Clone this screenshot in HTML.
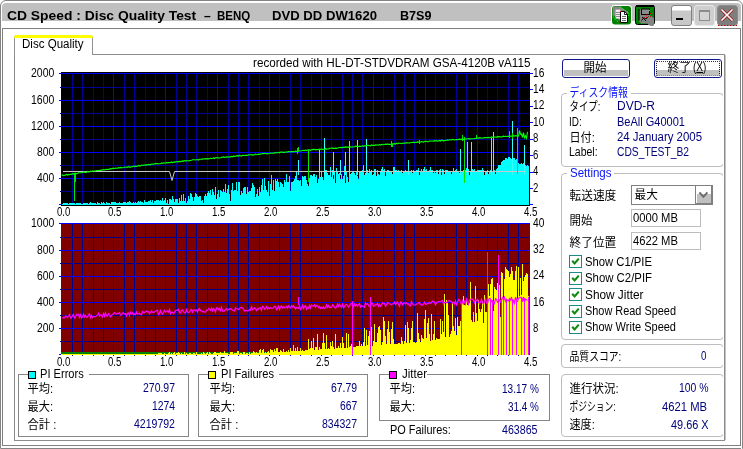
<!DOCTYPE html>
<html lang="ja"><head><meta charset="utf-8"><title>CD Speed : Disc Quality Test</title><style>
html,body{margin:0;padding:0;background:#fff}
body{width:743px;height:449px;overflow:hidden;position:relative;font-family:"Liberation Sans",sans-serif}
#win{will-change:transform;position:absolute;left:0;top:0;width:743px;height:449px;overflow:hidden;background:#fff}
#win div{box-sizing:content-box}
.t{position:absolute;overflow:visible;display:block}
.t text{font-family:"Liberation Sans",sans-serif;font-size:12.5px;white-space:pre}
.j{position:absolute;overflow:visible}
.j text{font-family:"Liberation Sans","Noto Sans CJK JP",sans-serif;font-size:12px;white-space:pre}
u{text-decoration:underline}
</style></head>
<body>
<div id="win">
<div style="position:absolute;left:0px;top:0px;width:741px;height:448px;border:1px solid #848484;border-bottom:1px solid #848484;border-radius:6px 6px 0 0;background:#fff;box-sizing:content-box;width:741px;height:447px"></div>
<div style="position:absolute;left:2px;top:3px;width:739px;height:18px;background:#c0c0c0;border-radius:4px 4px 0 0"></div>
<div style="position:absolute;left:2px;top:28px;width:737px;height:416px;border:1px solid #808080;background:#fff"></div>
<div style="position:absolute;left:741px;top:6px;width:1px;height:443px;background:#fff"></div>
<svg class="t" style="left:6.80px;top:7.60px" width="190.20" height="16"><text x="0" y="12" textLength="189.20" lengthAdjust="spacingAndGlyphs" fill="#000" font-weight="bold">CD Speed : Disc Quality Test</text></svg>
<svg class="t" style="left:203.50px;top:7.60px" width="7.70" height="16"><text x="0" y="12" textLength="6.70" lengthAdjust="spacingAndGlyphs" fill="#000" font-weight="bold">–</text></svg>
<svg class="t" style="left:217.40px;top:7.60px" width="34.20" height="16"><text x="0" y="12" textLength="33.20" lengthAdjust="spacingAndGlyphs" fill="#000" font-weight="bold">BENQ</text></svg>
<svg class="t" style="left:272.30px;top:7.60px" width="106.00" height="16"><text x="0" y="12" textLength="105.00" lengthAdjust="spacingAndGlyphs" fill="#000" font-weight="bold">DVD DD DW1620</text></svg>
<svg class="t" style="left:399.50px;top:7.60px" width="32.50" height="16"><text x="0" y="12" textLength="31.50" lengthAdjust="spacingAndGlyphs" fill="#000" font-weight="bold">B7S9</text></svg>
<svg style="position:absolute;left:611px;top:5px" width="21" height="21" viewBox="0 0 21 21">
<rect x="0" y="0" width="21" height="20.5" rx="4" fill="#fff"/>
<rect x="1" y="1" width="19" height="18.5" rx="3" fill="#008000"/>
<path d="M1.6 3Q1.6 1.6 3 1.6H9L17 7V16H9L1.6 9.5Z" fill="#858585"/>
<path d="M9 1.8L17.5 7.5V12M1.8 9.5L2.5 13L8 17.5" stroke="#1dff1d" stroke-width="1" stroke-dasharray="1 1.1" fill="none"/>
<rect x="4.6" y="4.6" width="4.8" height="9" fill="#ededed"/>
<path d="M5 7.5h4M5 9.5h4M5 11.5h4" stroke="#8a8a8a" stroke-width="1" shape-rendering="crispEdges"/>
<path d="M9.5 6.5h4.2l2.8 2.8v8.2h-7z" fill="#fff" stroke="#000" stroke-width="1"/>
<path d="M13.5 6.5v3h3" fill="none" stroke="#000" stroke-width=".9"/>
<path d="M11 11.5h4M11 13.5h4M11 15.5h4" stroke="#6e6e6e" stroke-width="1" shape-rendering="crispEdges"/>
<rect x="9" y="6" width="1" height="1" fill="#d00"/><rect x="8.5" y="17" width="1" height="1" fill="#d00"/>
</svg>
<svg style="position:absolute;left:635px;top:5px" width="21" height="21" viewBox="0 0 21 21">
<rect x=".5" y=".5" width="19" height="19" rx="2" fill="#008000" stroke="#000" stroke-width="1"/>
<rect x="1" y="0" width="18" height="2" fill="#000"/>
<path d="M4 4.5V16L6 18.5H12.5L13.5 20L17.5 21.5L19 20V13L15 10.5V4.5" fill="#858585"/>
<rect x="6.5" y="4" width="8" height="5.5" fill="#8c8c8c" stroke="#000" stroke-width="1"/>
<path d="M4 4V15.5" stroke="#000" stroke-width="1.2"/>
<path d="M6.5 15.5L9 12.5L11 14L13.5 11.5M7 12l4 4" stroke="#000" stroke-width=".9" fill="none"/>
<g fill="#e00000"><rect x="4" y="7" width="1" height="1"/><rect x="15" y="8" width="1" height="1"/><rect x="15" y="11" width="1" height="1"/><rect x="6" y="15.5" width="1" height="1"/><rect x="11" y="12" width="1" height="1"/><rect x="8.5" y="12" width="1" height="1"/><rect x="11" y="9.5" width="1" height="1"/></g>
<rect x="14" y="5" width="1" height="1" fill="#2f2"/>
</svg>
<div style="position:absolute;left:671px;top:5px;width:19px;height:19px;border:1px solid #808080;border-radius:3px;background:linear-gradient(#fff 0,#fff 4px,#c8c8c8 5px,#c8c8c8 100%)"></div>
<div style="position:absolute;left:676px;top:18px;width:7px;height:2px;background:#000"></div>
<div style="position:absolute;left:694px;top:5px;width:19px;height:19px;border:1px solid #e8e8e8;border-radius:3px;background:#cfcfcf"></div>
<div style="position:absolute;left:699px;top:10px;width:9px;height:9px;border:1px solid #8c8c8c;border-top:2px solid #8c8c8c;background:#d4d4d4;box-sizing:content-box;width:9px;height:8px"></div>
<svg style="position:absolute;left:717px;top:5px" width="21" height="21" viewBox="0 0 21 21">
<rect x=".5" y=".5" width="20" height="20" rx="3" fill="#7e7e7e" stroke="#8c8c8c"/>
<path d="M4.5 4.5L15.5 15.5M15.5 4.5L4.5 15.5" stroke="#9b0000" stroke-width="3"/>
<path d="M4.5 4.5L15.5 15.5M15.5 4.5L4.5 15.5" stroke="#fff" stroke-width="1.7"/>
<path d="M1 20.5H20" stroke="#c00000" stroke-width="1" stroke-dasharray="1.4 1.6"/>
</svg>
<div style="position:absolute;left:14px;top:54px;width:709px;height:385px;border:1px solid #8c8c8c;background:#fff"></div>
<div style="position:absolute;left:725px;top:55px;width:1px;height:385px;background:#c4c4c4"></div>
<div style="position:absolute;left:14px;top:35px;width:77px;height:20px;border:1px solid #919191;border-bottom:0;border-top:0;background:#fff;border-radius:3px 3px 0 0"></div>
<div style="position:absolute;left:14px;top:35px;width:79px;height:3px;background:#ffff00;border-radius:3px 3px 0 0"></div>
<svg class="t" style="left:21.90px;top:36.40px" width="62.60" height="16"><text x="0" y="12" textLength="61.60" lengthAdjust="spacingAndGlyphs" fill="#000">Disc Quality</text></svg>
<svg id="charts" style="position:absolute;left:0;top:0" width="743" height="449" viewBox="0 0 743 449" shape-rendering="crispEdges"><rect x="61" y="72" width="469" height="134" fill="#000"/><rect x="72" y="73" width="1" height="132" fill="#000096"/><rect x="82" y="73" width="1" height="132" fill="#000096"/><rect x="93" y="73" width="1" height="132" fill="#000096"/><rect x="103" y="73" width="1" height="132" fill="#000096"/><rect x="113" y="73" width="1" height="132" fill="#0000ff"/><rect x="124" y="73" width="1" height="132" fill="#000096"/><rect x="134" y="73" width="1" height="132" fill="#000096"/><rect x="145" y="73" width="1" height="132" fill="#000096"/><rect x="155" y="73" width="1" height="132" fill="#000096"/><rect x="165" y="73" width="1" height="132" fill="#0000ff"/><rect x="176" y="73" width="1" height="132" fill="#000096"/><rect x="186" y="73" width="1" height="132" fill="#000096"/><rect x="196" y="73" width="1" height="132" fill="#000096"/><rect x="207" y="73" width="1" height="132" fill="#000096"/><rect x="217" y="73" width="1" height="132" fill="#0000ff"/><rect x="228" y="73" width="1" height="132" fill="#000096"/><rect x="238" y="73" width="1" height="132" fill="#000096"/><rect x="248" y="73" width="1" height="132" fill="#000096"/><rect x="259" y="73" width="1" height="132" fill="#000096"/><rect x="269" y="73" width="1" height="132" fill="#0000ff"/><rect x="279" y="73" width="1" height="132" fill="#000096"/><rect x="290" y="73" width="1" height="132" fill="#000096"/><rect x="300" y="73" width="1" height="132" fill="#000096"/><rect x="311" y="73" width="1" height="132" fill="#000096"/><rect x="321" y="73" width="1" height="132" fill="#0000ff"/><rect x="331" y="73" width="1" height="132" fill="#000096"/><rect x="342" y="73" width="1" height="132" fill="#000096"/><rect x="352" y="73" width="1" height="132" fill="#000096"/><rect x="362" y="73" width="1" height="132" fill="#000096"/><rect x="373" y="73" width="1" height="132" fill="#0000ff"/><rect x="383" y="73" width="1" height="132" fill="#000096"/><rect x="394" y="73" width="1" height="132" fill="#000096"/><rect x="404" y="73" width="1" height="132" fill="#000096"/><rect x="414" y="73" width="1" height="132" fill="#000096"/><rect x="425" y="73" width="1" height="132" fill="#0000ff"/><rect x="435" y="73" width="1" height="132" fill="#000096"/><rect x="445" y="73" width="1" height="132" fill="#000096"/><rect x="456" y="73" width="1" height="132" fill="#000096"/><rect x="466" y="73" width="1" height="132" fill="#000096"/><rect x="477" y="73" width="1" height="132" fill="#0000ff"/><rect x="487" y="73" width="1" height="132" fill="#000096"/><rect x="497" y="73" width="1" height="132" fill="#000096"/><rect x="508" y="73" width="1" height="132" fill="#000096"/><rect x="518" y="73" width="1" height="132" fill="#000096"/><rect x="61" y="73" width="468" height="1" fill="#0000ff"/><rect x="59" y="73" width="2" height="1" fill="#0000ff"/><rect x="61" y="87" width="468" height="1" fill="#000096"/><rect x="60" y="87" width="1" height="1" fill="#000096"/><rect x="61" y="100" width="468" height="1" fill="#0000ff"/><rect x="59" y="100" width="2" height="1" fill="#0000ff"/><rect x="61" y="113" width="468" height="1" fill="#000096"/><rect x="60" y="113" width="1" height="1" fill="#000096"/><rect x="61" y="126" width="468" height="1" fill="#0000ff"/><rect x="59" y="126" width="2" height="1" fill="#0000ff"/><rect x="61" y="139" width="468" height="1" fill="#000096"/><rect x="60" y="139" width="1" height="1" fill="#000096"/><rect x="61" y="152" width="468" height="1" fill="#0000ff"/><rect x="59" y="152" width="2" height="1" fill="#0000ff"/><rect x="61" y="165" width="468" height="1" fill="#000096"/><rect x="60" y="165" width="1" height="1" fill="#000096"/><rect x="61" y="178" width="468" height="1" fill="#0000ff"/><rect x="59" y="178" width="2" height="1" fill="#0000ff"/><rect x="61" y="191" width="468" height="1" fill="#000096"/><rect x="60" y="191" width="1" height="1" fill="#000096"/><rect x="61" y="204" width="468" height="1" fill="#0000ff"/><rect x="59" y="204" width="2" height="1" fill="#0000ff"/><rect x="530" y="204" width="3" height="1" fill="#0000ff"/><rect x="529" y="196" width="1" height="1" fill="#0000c0"/><rect x="530" y="188" width="3" height="1" fill="#0000ff"/><rect x="529" y="180" width="1" height="1" fill="#0000c0"/><rect x="530" y="172" width="3" height="1" fill="#0000ff"/><rect x="529" y="163" width="1" height="1" fill="#0000c0"/><rect x="530" y="155" width="3" height="1" fill="#0000ff"/><rect x="529" y="147" width="1" height="1" fill="#0000c0"/><rect x="530" y="139" width="3" height="1" fill="#0000ff"/><rect x="529" y="131" width="1" height="1" fill="#0000c0"/><rect x="530" y="122" width="3" height="1" fill="#0000ff"/><rect x="529" y="114" width="1" height="1" fill="#0000c0"/><rect x="530" y="106" width="3" height="1" fill="#0000ff"/><rect x="529" y="98" width="1" height="1" fill="#0000c0"/><rect x="530" y="89" width="3" height="1" fill="#0000ff"/><rect x="529" y="81" width="1" height="1" fill="#0000c0"/><rect x="530" y="73" width="3" height="1" fill="#0000ff"/><path d="M62 205V203.6h1V203.1h1V203.2h1V202.9h1V203.0h1V203.2h1V204.0h1V203.0h1V203.3h1V203.1h1V203.0h1V203.1h1V203.1h1V203.9h1V202.7h1V203.0h1V202.9h1V202.9h1V203.0h1V203.7h1V203.5h1V203.1h1V202.6h1V203.1h1V202.9h1V202.8h1V203.8h1V202.5h1V202.4h1V202.9h1V202.8h1V202.9h1V202.9h1V203.1h1V203.7h1V202.2h1V203.0h1V202.7h1V203.7h1V202.4h1V202.6h1V202.0h1V202.5h1V203.8h1V202.2h1V202.8h1V202.8h1V203.3h1V203.8h1V202.4h1V202.3h1V202.0h1V202.4h1V202.0h1V203.3h1V202.5h1V203.4h1V202.1h1V202.5h1V202.5h1V203.1h1V201.6h1V202.2h1V202.0h1V202.6h1V202.0h1V201.7h1V201.1h1V201.9h1V202.8h1V202.6h1V202.3h1V203.0h1V201.9h1V202.6h1V201.6h1V200.5h1V201.5h1V201.3h1V202.0h1V201.7h1V202.6h1V200.1h1V201.6h1V202.2h1V201.7h1V201.4h1V201.3h1V199.9h1V201.6h1V200.2h1V203.1h1V200.7h1V201.3h1V200.4h1V200.0h1V199.9h1V200.9h1V200.3h1V200.7h1V198.3h1V200.5h1V200.0h1V197.6h1V203.3h1V199.6h1V203.7h1V198.9h1V198.8h1V199.8h1V196.1h1V199.3h1V202.0h1V198.7h1V198.9h1V199.3h1V203.1h1V197.6h1V200.6h1V195.4h1V201.0h1V193.6h1V201.1h1V198.4h1V203.1h1V201.2h1V195.8h1V199.4h1V192.7h1V194.2h1V196.7h1V200.8h1V197.1h1V193.0h1V194.4h1V195.9h1V196.5h1V195.5h1V195.5h1V201.4h1V200.3h1V202.7h1V196.1h1V194.0h1V196.0h1V193.2h1V191.4h1V192.5h1V189.5h1V195.1h1V188.8h1V192.3h1V194.9h1V186.5h1V198.6h1V194.0h1V189.6h1V197.2h1V190.1h1V190.5h1V191.9h1V189.4h1V191.8h1V184.1h1V193.3h1V189.2h1V185.0h1V194.4h1V200.5h1V189.7h1V183.0h1V191.2h1V189.7h1V189.7h1V182.0h1V191.0h1V182.3h1V182.0h1V194.8h1V191.0h1V192.7h1V187.7h1V187.2h1V186.7h1V193.8h1V187.2h1V192.3h1V190.7h1V190.5h1V187.7h1V183.0h1V185.3h1V186.6h1V197.0h1V193.8h1V188.6h1V196.4h1V186.7h1V191.7h1V184.5h1V178.9h1V189.5h1V177.6h1V185.8h1V189.7h1V191.5h1V180.5h1V195.7h1V184.3h1V175.2h1V189.7h1V180.1h1V190.6h1V178.6h1V180.6h1V179.2h1V182.4h1V187.2h1V182.4h1V182.8h1V183.6h1V187.3h1V179.9h1V182.0h1V173.6h1V181.5h1V182.2h1V175.8h1V190.6h1V181.7h1V181.8h1V180.7h1V179.3h1V176.2h1V171.7h1V179.6h1V179.7h1V181.4h1V179.6h1V185.8h1V176.3h1V176.9h1V175.5h1V176.4h1V179.7h1V183.5h1V186.0h1V177.7h1V175.1h1V174.6h1V175.8h1V174.4h1V174.1h1V177.1h1V175.2h1V182.5h1V179.4h1V174.4h1V177.4h1V171.5h1V177.3h1V180.0h1V167.1h1V170.0h1V170.4h1V173.2h1V174.7h1V175.4h1V166.9h1V177.0h1V170.1h1V179.1h1V171.2h1V183.3h1V167.6h1V172.1h1V174.4h1V172.6h1V179.0h1V173.6h1V179.0h1V175.8h1V166.2h1V182.7h1V170.6h1V176.5h1V182.3h1V173.7h1V174.0h1V172.5h1V170.5h1V171.9h1V172.6h1V174.5h1V170.5h1V176.4h1V179.0h1V170.8h1V170.8h1V171.1h1V170.3h1V165.2h1V174.6h1V172.7h1V173.8h1V170.3h1V173.3h1V169.1h1V171.9h1V170.3h1V175.4h1V174.3h1V168.9h1V169.4h1V175.7h1V169.7h1V173.5h1V174.5h1V171.4h1V169.3h1V166.9h1V170.4h1V169.3h1V176.4h1V171.3h1V169.9h1V169.8h1V170.9h1V171.0h1V171.1h1V174.1h1V167.3h1V166.8h1V170.1h1V169.5h1V170.9h1V170.2h1V170.6h1V172.3h1V169.6h1V173.2h1V170.8h1V170.5h1V169.6h1V170.9h1V171.6h1V173.9h1V172.4h1V171.2h1V170.4h1V173.0h1V170.0h1V170.9h1V172.2h1V170.2h1V170.0h1V167.9h1V174.8h1V172.2h1V169.1h1V171.3h1V169.2h1V167.2h1V170.3h1V169.2h1V171.1h1V171.3h1V170.2h1V167.4h1V169.7h1V170.3h1V172.6h1V170.5h1V172.7h1V169.9h1V170.0h1V174.2h1V170.4h1V168.9h1V174.5h1V169.3h1V169.7h1V174.1h1V169.8h1V170.3h1V170.1h1V171.1h1V172.4h1V170.7h1V173.8h1V172.4h1V168.1h1V170.7h1V169.7h1V169.0h1V171.2h1V172.3h1V173.0h1V170.0h1V170.9h1V170.9h1V170.2h1V172.6h1V169.8h1V168.1h1V170.3h1V168.8h1V174.5h1V171.3h1V171.7h1V168.9h1V170.4h1V169.2h1V170.8h1V171.0h1V169.9h1V170.2h1V170.3h1V170.0h1V169.7h1V167.8h1V170.2h1V174.5h1V172.1h1V170.7h1V169.9h1V173.9h1V171.1h1V169.6h1V169.9h1V170.6h1V170.3h1V170.4h1V173.7h1V168.5h1V167.6h1V165.2h1V164.5h1V165.1h1V162.3h1V160.9h1V160.0h1V159.9h1V158.0h1V157.7h1V159.0h1V157.3h1V156.5h1V158.2h1V159.1h1V158.4h1V158.1h1V158.2h1V159.5h1V159.3h1V159.1h1V163.0h1V163.9h1V163.7h1V162.6h1V164.1h1V163.3h1V165.8h1V164.6h1V165.5h1V164.7h1V166.0h1V205Z" fill="#00ffff"/><rect x="324" y="138" width="1" height="37" fill="#3ff"/><rect x="319" y="150" width="1" height="25" fill="#3ff"/><rect x="333" y="152" width="1" height="23" fill="#3ff"/><rect x="345" y="152" width="1" height="23" fill="#3ff"/><rect x="349" y="141" width="1" height="34" fill="#3ff"/><rect x="357" y="140" width="1" height="35" fill="#3ff"/><rect x="366" y="139" width="1" height="36" fill="#3ff"/><rect x="460" y="149" width="1" height="26" fill="#3ff"/><rect x="467" y="142" width="1" height="33" fill="#3ff"/><rect x="471" y="142" width="1" height="33" fill="#3ff"/><rect x="491" y="138" width="1" height="37" fill="#3ff"/><rect x="493" y="132" width="1" height="43" fill="#3ff"/><rect x="512" y="121" width="1" height="54" fill="#3ff"/><rect x="524" y="145" width="1" height="30" fill="#3ff"/><rect x="298" y="160" width="1" height="15" fill="#3ff"/><rect x="340" y="160" width="1" height="15" fill="#3ff"/><rect x="408" y="160" width="1" height="15" fill="#3ff"/><path d="M63 171.5H169.5L172 180.5L174.5 171.5H526" fill="none" stroke="#c8c8c8" stroke-width="1" shape-rendering="auto"/><path d="M61.5 175.3L62.5 175.1L63.5 175.6L64.5 175.4L65.5 174.9L66.5 174.4L67.5 175.0L68.5 174.4L69.5 174.7L70.5 174.3L71.5 174.3L72.5 173.6L73.5 174.0L74.5 173.4L75.5 173.4L76.5 173.6L77.5 173.5L78.5 172.8L79.5 172.7L80.5 172.7L81.5 172.7L82.5 172.5L83.5 172.1L84.5 172.1L85.5 172.3L86.5 172.3L87.5 171.5L88.5 171.8L89.5 171.8L90.5 171.1L91.5 171.6L92.5 170.9L93.5 171.2L94.5 171.0L95.5 171.0L96.5 170.6L97.5 170.5L98.5 170.5L99.5 170.3L100.5 170.4L101.5 170.1L102.5 169.9L103.5 169.5L104.5 169.8L105.5 169.6L106.5 169.3L107.5 169.6L108.5 169.5L109.5 169.1L110.5 168.7L111.5 168.9L112.5 168.4L113.5 168.3L114.5 168.5L115.5 168.1L116.5 168.2L117.5 168.2L118.5 167.7L119.5 168.0L120.5 167.5L121.5 167.9L122.5 167.8L123.5 167.5L124.5 167.0L125.5 167.2L126.5 167.0L127.5 167.4L128.5 166.6L129.5 167.1L130.5 167.1L131.5 166.7L132.5 166.7L133.5 166.1L134.5 166.6L135.5 166.1L136.5 166.4L137.5 166.2L138.5 165.5L139.5 165.9L140.5 165.9L141.5 165.1L142.5 165.2L143.5 165.4L144.5 164.8L145.5 165.3L146.5 164.7L147.5 165.0L148.5 164.4L149.5 164.6L150.5 164.8L151.5 164.1L152.5 164.1L153.5 164.2L154.5 163.9L155.5 163.6L156.5 163.6L157.5 163.5L158.5 164.0L159.5 163.7L160.5 163.7L161.5 163.0L162.5 163.4L163.5 162.8L164.5 163.0L165.5 163.0L166.5 162.7L167.5 163.0L168.5 162.6L169.5 162.6L170.5 162.7L171.5 162.0L172.5 162.6L173.5 162.2L174.5 161.9L175.5 162.1L176.5 161.6L177.5 162.1L178.5 161.6L179.5 161.4L180.5 161.6L181.5 161.2L182.5 160.9L183.5 161.3L184.5 160.6L185.5 161.1L186.5 160.6L187.5 160.8L188.5 161.0L189.5 160.6L190.5 160.5L191.5 160.2L192.5 159.8L193.5 159.7L194.5 159.7L195.5 160.0L196.5 159.8L197.5 159.7L198.5 160.0L199.5 159.2L200.5 159.2L201.5 159.5L202.5 158.9L203.5 158.8L204.5 159.0L205.5 158.7L206.5 158.8L207.5 158.6L208.5 158.8L209.5 158.7L210.5 158.3L211.5 158.5L212.5 158.3L213.5 157.9L214.5 158.5L215.5 157.8L216.5 157.7L217.5 157.5L218.5 157.9L219.5 158.0L220.5 157.8L221.5 157.4L222.5 157.2L223.5 156.9L224.5 157.3L225.5 157.2L226.5 156.9L227.5 157.1L228.5 156.8L229.5 157.1L230.5 156.9L231.5 156.4L232.5 156.8L233.5 156.1L234.5 156.4L235.5 156.2L236.5 155.9L237.5 155.7L238.5 156.2L239.5 155.5L240.5 155.8L241.5 156.1L242.5 155.3L243.5 155.3L244.5 155.5L245.5 155.4L246.5 155.4L247.5 155.4L248.5 154.8L249.5 154.9L250.5 154.8L251.5 154.5L252.5 155.1L253.5 154.9L254.5 154.8L255.5 154.1L256.5 154.7L257.5 154.5L258.5 154.2L259.5 154.4L260.5 154.0L261.5 153.8L262.5 153.6L263.5 153.6L264.5 153.4L265.5 153.5L266.5 153.8L267.5 153.6L268.5 153.7L269.5 153.5L270.5 153.0L271.5 153.2L272.5 153.0L273.5 153.2L274.5 152.9L275.5 152.6L276.5 152.8L277.5 153.0L278.5 152.3L279.5 152.8L280.5 152.0L281.5 152.1L282.5 152.0L283.5 152.4L284.5 152.4L285.5 152.2L286.5 151.8L287.5 152.1L288.5 151.6L289.5 151.5L290.5 151.9L291.5 151.6L292.5 151.6L293.5 151.5L294.5 151.7L295.5 151.2L296.5 151.4L297.5 151.2L298.5 151.2L299.5 150.8L300.5 151.0L301.5 150.8L302.5 150.5L303.5 150.3L304.5 150.6L305.5 150.1L306.5 150.6L307.5 150.0L308.5 149.8L309.5 149.8L310.5 150.3L311.5 149.8L312.5 149.6L313.5 149.4L314.5 149.3L315.5 149.8L316.5 149.6L317.5 149.6L318.5 149.6L319.5 149.0L320.5 149.3L321.5 149.0L322.5 149.3L323.5 149.2L324.5 149.2L325.5 148.5L326.5 149.1L327.5 149.0L328.5 149.0L329.5 148.2L330.5 148.2L331.5 148.1L332.5 147.9L333.5 148.5L334.5 148.4L335.5 148.2L336.5 148.3L337.5 148.0L338.5 147.7L339.5 147.5L340.5 147.4L341.5 147.8L342.5 147.3L343.5 147.3L344.5 147.3L345.5 146.9L346.5 147.1L347.5 147.0L348.5 147.3L349.5 146.9L350.5 146.8L351.5 147.2L352.5 146.8L353.5 147.0L354.5 146.7L355.5 146.2L356.5 146.4L357.5 146.4L358.5 146.6L359.5 146.2L360.5 146.4L361.5 146.2L362.5 145.8L363.5 146.3L364.5 145.6L365.5 146.1L366.5 145.5L367.5 145.3L368.5 145.4L369.5 145.8L370.5 145.9L371.5 145.0L372.5 145.3L373.5 145.3L374.5 145.4L375.5 144.9L376.5 145.0L377.5 144.9L378.5 145.2L379.5 144.6L380.5 145.1L381.5 144.5L382.5 144.4L383.5 144.7L384.5 144.5L385.5 144.1L386.5 144.4L387.5 143.9L388.5 144.4L389.5 144.3L390.5 144.3L391.5 144.1L392.5 143.8L393.5 143.8L394.5 143.7L395.5 144.0L396.5 143.3L397.5 143.9L398.5 143.1L399.5 143.2L400.5 143.2L401.5 143.6L402.5 143.2L403.5 143.0L404.5 143.4L405.5 142.8L406.5 142.9L407.5 142.9L408.5 143.0L409.5 142.9L410.5 142.8L411.5 142.5L412.5 142.4L413.5 142.2L414.5 142.7L415.5 142.4L416.5 142.4L417.5 141.9L418.5 142.1L419.5 142.3L420.5 142.0L421.5 141.6L422.5 141.8L423.5 142.1L424.5 141.5L425.5 141.4L426.5 141.4L427.5 141.7L428.5 141.7L429.5 141.1L430.5 141.0L431.5 141.0L432.5 141.0L433.5 141.1L434.5 140.7L435.5 140.8L436.5 140.6L437.5 141.2L438.5 140.9L439.5 140.4L440.5 141.0L441.5 140.2L442.5 140.4L443.5 140.8L444.5 140.6L445.5 140.5L446.5 140.2L447.5 139.9L448.5 140.2L449.5 139.7L450.5 139.7L451.5 139.8L452.5 139.4L453.5 139.7L454.5 139.9L455.5 139.8L456.5 139.6L457.5 139.6L458.5 139.4L459.5 139.1L460.5 139.4L461.5 139.2L462.5 139.4L463.5 139.4L464.5 139.0L465.5 139.0L466.5 139.1L467.5 138.8L468.5 138.6L469.5 138.9L470.5 138.9L471.5 138.8L472.5 138.7L473.5 138.7L474.5 138.5L475.5 138.4L476.5 138.2L477.5 138.0L478.5 138.2L479.5 137.7L480.5 137.9L481.5 138.2L482.5 138.0L483.5 137.9L484.5 137.5L485.5 137.6L486.5 137.6L487.5 137.6L488.5 137.4L489.5 137.6L490.5 137.7L491.5 137.0L492.5 137.4L493.5 137.4L494.5 137.0L495.5 137.0L496.5 137.4L497.5 136.5L498.5 136.9L499.5 136.5L500.5 136.9L501.5 137.0L502.5 136.6L503.5 136.2L504.5 136.5L505.5 136.4L506.5 136.5L507.5 136.3L508.5 136.3L509.5 136.4L510.5 136.1L511.5 136.0L512.5 136.3L513.5 135.7L514.5 136.0L515.5 135.7L516.5 135.9L517.5 135.4L518.5 136.0L519.5 130.5L520.5 134.2L521.5 134.1L522.5 137.5L523.5 132.6L524.5 137.7L525.5 135.8L526.5 138.2L527.5 131.8" fill="none" stroke="#00ff00" stroke-width="1.15" shape-rendering="auto"/><rect x="74" y="174" width="1" height="27" fill="#00e800"/><rect x="75" y="174" width="1" height="8" fill="#00e800"/><rect x="308" y="150" width="1" height="32" fill="#00e800"/><rect x="464" y="137" width="1" height="46" fill="#00e800"/><rect x="517" y="128" width="1" height="46" fill="#00e800"/><rect x="297" y="148" width="1" height="6" fill="#00e800"/><rect x="298" y="147" width="1" height="4" fill="#00e800"/><rect x="391" y="141" width="1" height="6" fill="#00e800"/><rect x="392" y="144" width="1" height="3" fill="#00e800"/><rect x="419" y="140" width="1" height="4" fill="#00e800"/><rect x="462" y="135" width="1" height="6" fill="#00e800"/><rect x="476" y="135" width="1" height="4" fill="#00e800"/><rect x="509" y="131" width="1" height="7" fill="#00e800"/><rect x="512" y="133" width="1" height="6" fill="#00e800"/><rect x="61" y="223" width="469" height="132" fill="#800000"/><rect x="72" y="223" width="1" height="132" fill="#00008c"/><rect x="82" y="223" width="1" height="132" fill="#00008c"/><rect x="93" y="223" width="1" height="132" fill="#00008c"/><rect x="103" y="223" width="1" height="132" fill="#00008c"/><rect x="113" y="223" width="1" height="132" fill="#0000ff"/><rect x="124" y="223" width="1" height="132" fill="#00008c"/><rect x="134" y="223" width="1" height="132" fill="#00008c"/><rect x="145" y="223" width="1" height="132" fill="#00008c"/><rect x="155" y="223" width="1" height="132" fill="#00008c"/><rect x="165" y="223" width="1" height="132" fill="#0000ff"/><rect x="176" y="223" width="1" height="132" fill="#00008c"/><rect x="186" y="223" width="1" height="132" fill="#00008c"/><rect x="196" y="223" width="1" height="132" fill="#00008c"/><rect x="207" y="223" width="1" height="132" fill="#00008c"/><rect x="217" y="223" width="1" height="132" fill="#0000ff"/><rect x="228" y="223" width="1" height="132" fill="#00008c"/><rect x="238" y="223" width="1" height="132" fill="#00008c"/><rect x="248" y="223" width="1" height="132" fill="#00008c"/><rect x="259" y="223" width="1" height="132" fill="#00008c"/><rect x="269" y="223" width="1" height="132" fill="#0000ff"/><rect x="279" y="223" width="1" height="132" fill="#00008c"/><rect x="290" y="223" width="1" height="132" fill="#00008c"/><rect x="300" y="223" width="1" height="132" fill="#00008c"/><rect x="311" y="223" width="1" height="132" fill="#00008c"/><rect x="321" y="223" width="1" height="132" fill="#0000ff"/><rect x="331" y="223" width="1" height="132" fill="#00008c"/><rect x="342" y="223" width="1" height="132" fill="#00008c"/><rect x="352" y="223" width="1" height="132" fill="#00008c"/><rect x="362" y="223" width="1" height="132" fill="#00008c"/><rect x="373" y="223" width="1" height="132" fill="#0000ff"/><rect x="383" y="223" width="1" height="132" fill="#00008c"/><rect x="394" y="223" width="1" height="132" fill="#00008c"/><rect x="404" y="223" width="1" height="132" fill="#00008c"/><rect x="414" y="223" width="1" height="132" fill="#00008c"/><rect x="425" y="223" width="1" height="132" fill="#0000ff"/><rect x="435" y="223" width="1" height="132" fill="#00008c"/><rect x="445" y="223" width="1" height="132" fill="#00008c"/><rect x="456" y="223" width="1" height="132" fill="#00008c"/><rect x="466" y="223" width="1" height="132" fill="#00008c"/><rect x="477" y="223" width="1" height="132" fill="#0000ff"/><rect x="487" y="223" width="1" height="132" fill="#00008c"/><rect x="497" y="223" width="1" height="132" fill="#00008c"/><rect x="508" y="223" width="1" height="132" fill="#00008c"/><rect x="518" y="223" width="1" height="132" fill="#00008c"/><rect x="61" y="223" width="468" height="1" fill="#0000ff"/><rect x="59" y="223" width="2" height="1" fill="#0000ff"/><rect x="61" y="237" width="468" height="1" fill="#00008c"/><rect x="60" y="237" width="1" height="1" fill="#00008c"/><rect x="61" y="250" width="468" height="1" fill="#0000ff"/><rect x="59" y="250" width="2" height="1" fill="#0000ff"/><rect x="61" y="263" width="468" height="1" fill="#00008c"/><rect x="60" y="263" width="1" height="1" fill="#00008c"/><rect x="61" y="276" width="468" height="1" fill="#0000ff"/><rect x="59" y="276" width="2" height="1" fill="#0000ff"/><rect x="61" y="289" width="468" height="1" fill="#00008c"/><rect x="60" y="289" width="1" height="1" fill="#00008c"/><rect x="61" y="302" width="468" height="1" fill="#0000ff"/><rect x="59" y="302" width="2" height="1" fill="#0000ff"/><rect x="61" y="315" width="468" height="1" fill="#00008c"/><rect x="60" y="315" width="1" height="1" fill="#00008c"/><rect x="61" y="328" width="468" height="1" fill="#0000ff"/><rect x="59" y="328" width="2" height="1" fill="#0000ff"/><rect x="61" y="341" width="468" height="1" fill="#00008c"/><rect x="60" y="341" width="1" height="1" fill="#00008c"/><rect x="61" y="354" width="468" height="1" fill="#0000ff"/><rect x="59" y="354" width="2" height="1" fill="#0000ff"/><rect x="72" y="355" width="1" height="1" fill="#0000c0"/><rect x="82" y="355" width="1" height="1" fill="#0000c0"/><rect x="93" y="355" width="1" height="1" fill="#0000c0"/><rect x="103" y="355" width="1" height="1" fill="#0000c0"/><rect x="113" y="355" width="1" height="1" fill="#0000c0"/><rect x="124" y="355" width="1" height="1" fill="#0000c0"/><rect x="134" y="355" width="1" height="1" fill="#0000c0"/><rect x="145" y="355" width="1" height="1" fill="#0000c0"/><rect x="155" y="355" width="1" height="1" fill="#0000c0"/><rect x="165" y="355" width="1" height="1" fill="#0000c0"/><rect x="176" y="355" width="1" height="1" fill="#0000c0"/><rect x="186" y="355" width="1" height="1" fill="#0000c0"/><rect x="196" y="355" width="1" height="1" fill="#0000c0"/><rect x="207" y="355" width="1" height="1" fill="#0000c0"/><rect x="217" y="355" width="1" height="1" fill="#0000c0"/><rect x="228" y="355" width="1" height="1" fill="#0000c0"/><rect x="238" y="355" width="1" height="1" fill="#0000c0"/><rect x="248" y="355" width="1" height="1" fill="#0000c0"/><rect x="259" y="355" width="1" height="1" fill="#0000c0"/><rect x="269" y="355" width="1" height="1" fill="#0000c0"/><rect x="279" y="355" width="1" height="1" fill="#0000c0"/><rect x="290" y="355" width="1" height="1" fill="#0000c0"/><rect x="300" y="355" width="1" height="1" fill="#0000c0"/><rect x="311" y="355" width="1" height="1" fill="#0000c0"/><rect x="321" y="355" width="1" height="1" fill="#0000c0"/><rect x="331" y="355" width="1" height="1" fill="#0000c0"/><rect x="342" y="355" width="1" height="1" fill="#0000c0"/><rect x="352" y="355" width="1" height="1" fill="#0000c0"/><rect x="362" y="355" width="1" height="1" fill="#0000c0"/><rect x="373" y="355" width="1" height="1" fill="#0000c0"/><rect x="383" y="355" width="1" height="1" fill="#0000c0"/><rect x="394" y="355" width="1" height="1" fill="#0000c0"/><rect x="404" y="355" width="1" height="1" fill="#0000c0"/><rect x="414" y="355" width="1" height="1" fill="#0000c0"/><rect x="425" y="355" width="1" height="1" fill="#0000c0"/><rect x="435" y="355" width="1" height="1" fill="#0000c0"/><rect x="445" y="355" width="1" height="1" fill="#0000c0"/><rect x="456" y="355" width="1" height="1" fill="#0000c0"/><rect x="466" y="355" width="1" height="1" fill="#0000c0"/><rect x="477" y="355" width="1" height="1" fill="#0000c0"/><rect x="487" y="355" width="1" height="1" fill="#0000c0"/><rect x="497" y="355" width="1" height="1" fill="#0000c0"/><rect x="508" y="355" width="1" height="1" fill="#0000c0"/><rect x="518" y="355" width="1" height="1" fill="#0000c0"/><rect x="61" y="352" width="468" height="3" fill="#008000"/><rect x="61" y="354" width="1" height="1" fill="#ffff00"/><path d="M62 355V353.8h1V354.0h1V354.0h1V353.8h1V354.0h1V354.0h1V354.0h1V354.0h1V354.0h1V354.0h1V354.0h1V354.0h1V353.8h1V353.9h1V354.0h1V354.0h1V354.0h1V354.0h1V353.8h1V354.0h1V353.7h1V354.0h1V353.7h1V354.0h1V353.9h1V353.7h1V354.0h1V354.0h1V353.7h1V354.0h1V354.0h1V354.0h1V353.7h1V353.9h1V353.9h1V354.0h1V353.9h1V354.0h1V354.0h1V354.0h1V353.9h1V353.7h1V354.0h1V354.0h1V354.0h1V354.0h1V354.0h1V353.7h1V354.0h1V353.9h1V354.0h1V354.0h1V354.0h1V353.9h1V354.0h1V353.9h1V353.7h1V353.9h1V354.0h1V354.0h1V354.0h1V353.9h1V354.0h1V354.0h1V353.7h1V354.0h1V353.6h1V354.0h1V353.8h1V353.8h1V354.0h1V354.0h1V354.0h1V354.0h1V354.0h1V354.0h1V354.0h1V354.0h1V353.8h1V354.0h1V354.0h1V354.0h1V354.0h1V354.0h1V353.9h1V354.0h1V353.6h1V353.8h1V354.0h1V354.0h1V353.6h1V354.0h1V354.0h1V353.9h1V354.0h1V353.6h1V353.1h1V352.8h1V352.8h1V353.4h1V353.9h1V353.8h1V352.7h1V354.0h1V353.7h1V354.0h1V353.3h1V352.3h1V353.6h1V352.6h1V353.6h1V353.3h1V352.3h1V353.5h1V353.3h1V353.3h1V352.3h1V353.3h1V353.8h1V353.2h1V354.0h1V353.7h1V352.0h1V354.0h1V353.2h1V354.0h1V353.6h1V353.1h1V353.1h1V354.0h1V353.6h1V352.6h1V353.1h1V354.0h1V351.8h1V354.0h1V353.5h1V353.9h1V354.0h1V353.2h1V353.9h1V351.8h1V353.4h1V353.8h1V353.1h1V351.7h1V353.6h1V351.6h1V353.4h1V353.9h1V353.6h1V352.9h1V352.4h1V351.6h1V352.9h1V352.9h1V352.5h1V353.4h1V351.6h1V353.2h1V353.3h1V353.0h1V351.0h1V353.4h1V353.2h1V353.4h1V353.6h1V353.8h1V352.4h1V352.1h1V352.3h1V353.7h1V352.5h1V353.0h1V353.2h1V350.7h1V351.4h1V353.7h1V353.2h1V352.8h1V353.7h1V352.2h1V351.6h1V353.6h1V352.9h1V353.4h1V353.6h1V351.9h1V353.6h1V353.0h1V353.3h1V351.4h1V351.7h1V352.5h1V351.5h1V352.6h1V352.7h1V349.5h1V349.4h1V353.1h1V350.4h1V349.1h1V352.8h1V352.0h1V352.6h1V352.3h1V351.0h1V352.5h1V348.5h1V349.8h1V350.1h1V352.2h1V349.3h1V351.1h1V347.5h1V347.7h1V351.9h1V351.5h1V349.8h1V350.7h1V352.4h1V349.3h1V351.6h1V351.7h1V351.4h1V351.6h1V349.8h1V351.7h1V347.5h1V351.3h1V351.1h1V345.1h1V351.1h1V348.4h1V351.2h1V347.4h1V351.2h1V351.0h1V347.8h1V350.8h1V350.4h1V350.5h1V350.9h1V350.1h1V350.4h1V350.2h1V338.9h1V349.4h1V348.1h1V340.7h1V348.1h1V337.9h1V350.1h1V347.1h1V346.9h1V334.2h1V349.5h1V347.2h1V348.9h1V349.1h1V342.8h1V332.8h1V342.7h1V348.8h1V335.3h1V348.9h1V348.4h1V348.9h1V341.5h1V346.1h1V341.2h1V347.4h1V348.6h1V333.9h1V347.9h1V348.4h1V345.8h1V347.9h1V343.4h1V347.6h1V336.5h1V342.9h1V347.8h1V347.7h1V332.8h1V347.6h1V334.0h1V347.0h1V346.3h1V344.2h1V338.2h1V347.0h1V346.8h1V347.0h1V346.2h1V346.3h1V346.3h1V341.4h1V346.1h1V343.6h1V346.0h1V342.4h1V327.8h1V345.9h1V329.9h1V344.6h1V336.1h1V330.5h1V333.6h1V327.4h1V345.5h1V341.4h1V323.6h1V341.8h1V342.2h1V332.8h1V327.1h1V325.5h1V330.2h1V344.6h1V341.6h1V316.5h1V320.9h1V335.6h1V344.4h1V328.6h1V321.0h1V331.9h1V344.4h1V329.2h1V321.8h1V338.7h1V343.9h1V344.0h1V343.8h1V343.9h1V343.4h1V343.2h1V343.6h1V337.3h1V340.5h1V343.6h1V340.6h1V324.9h1V342.9h1V322.4h1V327.6h1V343.2h1V339.7h1V327.7h1V321.3h1V341.7h1V342.4h1V342.8h1V342.2h1V312.7h1V332.9h1V338.7h1V342.4h1V335.4h1V338.3h1V339.1h1V319.2h1V310.0h1V337.6h1V323.0h1V317.7h1V334.3h1V340.6h1V314.2h1V340.1h1V333.6h1V321.0h1V339.9h1V338.1h1V339.3h1V339.4h1V338.7h1V318.9h1V333.7h1V321.4h1V332.3h1V294.1h1V336.7h1V299.7h1V302.6h1V315.1h1V336.7h1V334.3h1V330.8h1V302.3h1V326.3h1V331.4h1V318.1h1V334.8h1V316.9h1V326.4h1V326.2h1V321.4h1V333.3h1V302.7h1V296.1h1V305.0h1V303.9h1V300.5h1V305.4h1V304.2h1V302.6h1V281.9h1V320.0h1V322.4h1V311.7h1V321.7h1V285.9h1V312.9h1V320.7h1V300.2h1V309.0h1V311.9h1V309.4h1V300.8h1V323.1h1V295.4h1V312.0h1V311.9h1V323.3h1V284.3h1V295.7h1V283.6h1V279.2h1V278.1h1V311.1h1V287.3h1V289.3h1V290.0h1V282.8h1V305.6h1V285.0h1V316.7h1V271.8h1V272.5h1V304.9h1V278.7h1V267.1h1V269.3h1V270.3h1V270.8h1V276.5h1V273.8h1V266.6h1V270.6h1V279.7h1V279.7h1V271.1h1V265.8h1V299.4h1V266.6h1V296.3h1V278.2h1V294.5h1V264.2h1V280.8h1V277.0h1V275.1h1V272.8h1V274.1h1V295.9h1V355Z" fill="#ffff00"/><path d="M62.5 318.5L63.5 317.3L64.5 317.9L65.5 315.8L66.5 316.5L67.5 317.6L68.5 316.0L69.5 314.5L70.5 318.1L71.5 317.8L72.5 315.6L73.5 314.5L74.5 318.0L75.5 316.9L76.5 314.3L77.5 315.2L78.5 314.5L79.5 317.5L80.5 314.9L81.5 317.9L82.5 317.1L83.5 314.2L84.5 316.8L85.5 315.4L86.5 316.9L87.5 317.3L88.5 314.8L89.5 313.9L90.5 317.6L91.5 315.3L92.5 317.5L93.5 316.4L94.5 316.5L95.5 316.9L96.5 315.9L97.5 315.1L98.5 313.3L99.5 316.1L100.5 314.9L101.5 315.2L102.5 317.0L103.5 313.4L104.5 316.1L105.5 312.9L106.5 315.8L107.5 316.2L108.5 313.7L109.5 315.0L110.5 316.8L111.5 315.3L112.5 314.8L113.5 313.5L114.5 312.6L115.5 313.8L116.5 314.0L117.5 313.1L118.5 313.5L119.5 312.7L120.5 315.1L121.5 314.9L122.5 313.0L123.5 312.9L124.5 314.1L125.5 313.7L126.5 315.9L127.5 313.2L128.5 313.0L129.5 315.5L130.5 312.2L131.5 314.0L132.5 312.9L133.5 315.0L134.5 313.8L135.5 314.7L136.5 312.0L137.5 314.1L138.5 313.8L139.5 313.1L140.5 314.4L141.5 314.7L142.5 311.5L143.5 312.2L144.5 312.5L145.5 311.7L146.5 311.0L147.5 312.0L148.5 311.6L149.5 313.7L150.5 312.6L151.5 311.0L152.5 311.9L153.5 312.5L154.5 312.0L155.5 311.1L156.5 310.6L157.5 310.3L158.5 314.6L159.5 313.5L160.5 310.5L161.5 313.2L162.5 314.3L163.5 312.4L164.5 310.4L165.5 312.0L166.5 311.7L167.5 310.6L168.5 312.1L169.5 309.7L170.5 313.7L171.5 312.4L172.5 312.3L173.5 313.6L174.5 312.3L175.5 310.5L176.5 310.4L177.5 309.9L178.5 309.4L179.5 312.6L180.5 312.9L181.5 310.4L182.5 309.9L183.5 311.8L184.5 312.7L185.5 313.0L186.5 309.6L187.5 312.3L188.5 312.4L189.5 312.0L190.5 310.1L191.5 309.4L192.5 312.2L193.5 309.9L194.5 310.1L195.5 310.9L196.5 310.0L197.5 312.0L198.5 309.3L199.5 308.4L200.5 310.7L201.5 310.9L202.5 311.7L203.5 311.2L204.5 312.1L205.5 312.2L206.5 310.2L207.5 310.2L208.5 308.6L209.5 309.2L210.5 310.4L211.5 308.2L212.5 310.8L213.5 308.5L214.5 309.7L215.5 312.0L216.5 308.1L217.5 307.8L218.5 309.6L219.5 308.4L220.5 310.7L221.5 307.5L222.5 311.2L223.5 311.2L224.5 310.9L225.5 309.3L226.5 308.6L227.5 310.3L228.5 309.6L229.5 309.1L230.5 308.7L231.5 309.1L232.5 310.1L233.5 310.8L234.5 311.1L235.5 307.8L236.5 308.4L237.5 309.0L238.5 309.5L239.5 308.5L240.5 307.8L241.5 307.3L242.5 308.3L243.5 308.9L244.5 311.1L245.5 310.8L246.5 310.5L247.5 311.0L248.5 310.9L249.5 309.4L250.5 310.2L251.5 306.8L252.5 309.5L253.5 309.2L254.5 307.8L255.5 309.0L256.5 310.6L257.5 308.5L258.5 309.2L259.5 307.6L260.5 307.8L261.5 310.2L262.5 306.4L263.5 307.0L264.5 309.2L265.5 308.1L266.5 306.5L267.5 309.0L268.5 307.7L269.5 308.6L270.5 307.8L271.5 308.3L272.5 308.4L273.5 307.6L274.5 306.4L275.5 306.6L276.5 309.7L277.5 308.2L278.5 306.2L279.5 309.5L280.5 306.8L281.5 306.0L282.5 307.9L283.5 306.7L284.5 307.7L285.5 307.9L286.5 306.5L287.5 308.0L288.5 305.9L289.5 307.6L290.5 307.9L291.5 305.7L292.5 307.1L293.5 305.6L294.5 307.2L295.5 309.0L296.5 307.6L297.5 308.3L298.5 308.4L299.5 305.6L300.5 309.4L301.5 308.2L302.5 305.4L303.5 308.6L304.5 306.6L305.5 305.6L306.5 309.1L307.5 307.3L308.5 308.2L309.5 305.3L310.5 308.1L311.5 304.9L312.5 305.7L313.5 306.3L314.5 304.7L315.5 307.2L316.5 305.5L317.5 305.8L318.5 307.6L319.5 306.3L320.5 308.3L321.5 307.1L322.5 308.2L323.5 306.8L324.5 308.3L325.5 308.1L326.5 304.9L327.5 307.5L328.5 305.6L329.5 307.5L330.5 307.1L331.5 307.7L332.5 304.6L333.5 305.6L334.5 307.2L335.5 308.1L336.5 307.1L337.5 304.0L338.5 306.5L339.5 304.2L340.5 306.2L341.5 307.3L342.5 304.2L343.5 307.7L344.5 306.6L345.5 304.7L346.5 304.4L347.5 305.5L348.5 307.2L349.5 306.0L350.5 303.9L351.5 303.5L352.5 303.9L353.5 306.9L354.5 304.1L355.5 305.7L356.5 304.5L357.5 306.2L358.5 304.9L359.5 303.8L360.5 307.0L361.5 305.5L362.5 306.1L363.5 306.6L364.5 307.2L365.5 303.0L366.5 304.4L367.5 303.6L368.5 305.1L369.5 306.7L370.5 306.3L371.5 302.9L372.5 303.5L373.5 306.3L374.5 305.7L375.5 304.4L376.5 304.7L377.5 303.3L378.5 306.3L379.5 304.3L380.5 306.3L381.5 305.1L382.5 302.8L383.5 303.8L384.5 303.3L385.5 306.3L386.5 304.9L387.5 302.5L388.5 303.0L389.5 303.8L390.5 304.2L391.5 304.7L392.5 303.8L393.5 303.6L394.5 302.0L395.5 304.5L396.5 303.4L397.5 302.0L398.5 303.9L399.5 306.2L400.5 302.0L401.5 302.4L402.5 304.7L403.5 302.9L404.5 302.9L405.5 303.8L406.5 302.8L407.5 304.1L408.5 303.9L409.5 305.7L410.5 305.8L411.5 301.6L412.5 303.9L413.5 304.7L414.5 305.2L415.5 304.7L416.5 304.0L417.5 304.0L418.5 302.8L419.5 302.4L420.5 304.6L421.5 304.9L422.5 305.2L423.5 304.0L424.5 302.3L425.5 304.3L426.5 304.2L427.5 303.1L428.5 303.6L429.5 302.3L430.5 303.2L431.5 302.5L432.5 301.0L433.5 302.1L434.5 302.0L435.5 304.9L436.5 302.7L437.5 302.1L438.5 301.6L439.5 301.5L440.5 301.9L441.5 301.0L442.5 300.4L443.5 304.1L444.5 302.3L445.5 302.2L446.5 302.7L447.5 301.5L448.5 300.9L449.5 300.4L450.5 301.4L451.5 301.4L452.5 303.2L453.5 302.4L454.5 304.0L455.5 301.1L456.5 304.8L457.5 302.6L458.5 299.3L459.5 299.9L460.5 302.4L461.5 305.0L462.5 300.9L463.5 303.6L464.5 301.3L465.5 304.1L466.5 298.9L467.5 301.6L468.5 304.2L469.5 300.1L470.5 300.0L471.5 298.4L472.5 299.3L473.5 300.0L474.5 302.8L475.5 299.6L476.5 300.7L477.5 299.4L478.5 302.0L479.5 303.6L480.5 302.2L481.5 299.2L482.5 302.7L483.5 304.1L484.5 301.7L485.5 298.3L486.5 303.0L487.5 303.4L488.5 299.9L489.5 298.5L490.5 298.8L491.5 301.1L492.5 303.2L493.5 301.7L494.5 303.5L495.5 298.8L496.5 299.5L497.5 302.2L498.5 301.6L499.5 299.9L500.5 301.7L501.5 299.4L502.5 297.6L503.5 299.9L504.5 297.4L505.5 301.2L506.5 299.2L507.5 300.2L508.5 300.9L509.5 298.6L510.5 299.9L511.5 297.0L512.5 302.9L513.5 300.5L514.5 303.2L515.5 297.1L516.5 300.7L517.5 301.4L518.5 298.8L519.5 297.2L520.5 297.6L521.5 297.5L522.5 301.5L523.5 297.0L524.5 301.7L525.5 299.1L526.5 299.9L527.5 300.1" fill="none" stroke="#ff00ff" stroke-width="1.2" shape-rendering="auto"/><rect x="298" y="297" width="1" height="8" fill="#ff00ff"/><rect x="487" y="252" width="1" height="53" fill="#ff00ff"/><rect x="498" y="255" width="1" height="50" fill="#ff00ff"/><rect x="352" y="301" width="1" height="54" fill="#ff00ff"/><rect x="370" y="297" width="1" height="58" fill="#ff00ff"/><rect x="461" y="303" width="1" height="52" fill="#ff00ff"/><rect x="487" y="252" width="1" height="103" fill="#ff00ff"/><rect x="490" y="300" width="1" height="55" fill="#ff00ff"/><rect x="492" y="300" width="1" height="55" fill="#ff00ff"/><rect x="498" y="255" width="1" height="100" fill="#ff00ff"/><rect x="501" y="300" width="1" height="55" fill="#ff00ff"/><rect x="503" y="298" width="1" height="57" fill="#ff00ff"/><rect x="506" y="300" width="1" height="55" fill="#ff00ff"/><rect x="509" y="299" width="1" height="56" fill="#ff00ff"/><rect x="512" y="299" width="1" height="56" fill="#ff00ff"/><rect x="516" y="298" width="1" height="57" fill="#ff00ff"/><rect x="521" y="298" width="1" height="57" fill="#ff00ff"/><rect x="524" y="298" width="1" height="57" fill="#ff00ff"/><rect x="528" y="297" width="1" height="58" fill="#ff00ff"/></svg>
<svg class="t" style="left:30.70px;top:64.80px" width="24.30" height="16"><text x="0" y="12" textLength="23.30" lengthAdjust="spacingAndGlyphs" fill="#000">2000</text></svg>
<svg class="t" style="left:30.70px;top:91.80px" width="24.30" height="16"><text x="0" y="12" textLength="23.30" lengthAdjust="spacingAndGlyphs" fill="#000">1600</text></svg>
<svg class="t" style="left:30.70px;top:117.80px" width="24.30" height="16"><text x="0" y="12" textLength="23.30" lengthAdjust="spacingAndGlyphs" fill="#000">1200</text></svg>
<svg class="t" style="left:36.70px;top:143.80px" width="18.30" height="16"><text x="0" y="12" textLength="17.30" lengthAdjust="spacingAndGlyphs" fill="#000">800</text></svg>
<svg class="t" style="left:36.70px;top:169.80px" width="18.30" height="16"><text x="0" y="12" textLength="17.30" lengthAdjust="spacingAndGlyphs" fill="#000">400</text></svg>
<svg class="t" style="left:30.70px;top:214.80px" width="24.30" height="16"><text x="0" y="12" textLength="23.30" lengthAdjust="spacingAndGlyphs" fill="#000">1000</text></svg>
<svg class="t" style="left:36.70px;top:241.80px" width="18.30" height="16"><text x="0" y="12" textLength="17.30" lengthAdjust="spacingAndGlyphs" fill="#000">800</text></svg>
<svg class="t" style="left:36.70px;top:267.80px" width="18.30" height="16"><text x="0" y="12" textLength="17.30" lengthAdjust="spacingAndGlyphs" fill="#000">600</text></svg>
<svg class="t" style="left:36.70px;top:293.80px" width="18.30" height="16"><text x="0" y="12" textLength="17.30" lengthAdjust="spacingAndGlyphs" fill="#000">400</text></svg>
<svg class="t" style="left:36.70px;top:319.80px" width="18.30" height="16"><text x="0" y="12" textLength="17.30" lengthAdjust="spacingAndGlyphs" fill="#000">200</text></svg>
<svg class="t" style="left:56.80px;top:204.40px" width="14.40" height="16"><text x="0" y="12" textLength="13.40" lengthAdjust="spacingAndGlyphs" fill="#000">0.0</text></svg>
<svg class="t" style="left:56.80px;top:354.20px" width="14.40" height="16"><text x="0" y="12" textLength="13.40" lengthAdjust="spacingAndGlyphs" fill="#000">0.0</text></svg>
<svg class="t" style="left:107.80px;top:204.40px" width="14.40" height="16"><text x="0" y="12" textLength="13.40" lengthAdjust="spacingAndGlyphs" fill="#000">0.5</text></svg>
<svg class="t" style="left:107.80px;top:354.20px" width="14.40" height="16"><text x="0" y="12" textLength="13.40" lengthAdjust="spacingAndGlyphs" fill="#000">0.5</text></svg>
<svg class="t" style="left:159.80px;top:204.40px" width="14.40" height="16"><text x="0" y="12" textLength="13.40" lengthAdjust="spacingAndGlyphs" fill="#000">1.0</text></svg>
<svg class="t" style="left:159.80px;top:354.20px" width="14.40" height="16"><text x="0" y="12" textLength="13.40" lengthAdjust="spacingAndGlyphs" fill="#000">1.0</text></svg>
<svg class="t" style="left:211.80px;top:204.40px" width="14.40" height="16"><text x="0" y="12" textLength="13.40" lengthAdjust="spacingAndGlyphs" fill="#000">1.5</text></svg>
<svg class="t" style="left:211.80px;top:354.20px" width="14.40" height="16"><text x="0" y="12" textLength="13.40" lengthAdjust="spacingAndGlyphs" fill="#000">1.5</text></svg>
<svg class="t" style="left:263.80px;top:204.40px" width="14.40" height="16"><text x="0" y="12" textLength="13.40" lengthAdjust="spacingAndGlyphs" fill="#000">2.0</text></svg>
<svg class="t" style="left:263.80px;top:354.20px" width="14.40" height="16"><text x="0" y="12" textLength="13.40" lengthAdjust="spacingAndGlyphs" fill="#000">2.0</text></svg>
<svg class="t" style="left:315.80px;top:204.40px" width="14.40" height="16"><text x="0" y="12" textLength="13.40" lengthAdjust="spacingAndGlyphs" fill="#000">2.5</text></svg>
<svg class="t" style="left:315.80px;top:354.20px" width="14.40" height="16"><text x="0" y="12" textLength="13.40" lengthAdjust="spacingAndGlyphs" fill="#000">2.5</text></svg>
<svg class="t" style="left:367.80px;top:204.40px" width="14.40" height="16"><text x="0" y="12" textLength="13.40" lengthAdjust="spacingAndGlyphs" fill="#000">3.0</text></svg>
<svg class="t" style="left:367.80px;top:354.20px" width="14.40" height="16"><text x="0" y="12" textLength="13.40" lengthAdjust="spacingAndGlyphs" fill="#000">3.0</text></svg>
<svg class="t" style="left:419.80px;top:204.40px" width="14.40" height="16"><text x="0" y="12" textLength="13.40" lengthAdjust="spacingAndGlyphs" fill="#000">3.5</text></svg>
<svg class="t" style="left:419.80px;top:354.20px" width="14.40" height="16"><text x="0" y="12" textLength="13.40" lengthAdjust="spacingAndGlyphs" fill="#000">3.5</text></svg>
<svg class="t" style="left:471.80px;top:204.40px" width="14.40" height="16"><text x="0" y="12" textLength="13.40" lengthAdjust="spacingAndGlyphs" fill="#000">4.0</text></svg>
<svg class="t" style="left:471.80px;top:354.20px" width="14.40" height="16"><text x="0" y="12" textLength="13.40" lengthAdjust="spacingAndGlyphs" fill="#000">4.0</text></svg>
<svg class="t" style="left:524.00px;top:204.40px" width="14.40" height="16"><text x="0" y="12" textLength="13.40" lengthAdjust="spacingAndGlyphs" fill="#000">4.5</text></svg>
<svg class="t" style="left:524.00px;top:354.20px" width="14.40" height="16"><text x="0" y="12" textLength="13.40" lengthAdjust="spacingAndGlyphs" fill="#000">4.5</text></svg>
<svg class="t" style="left:532.80px;top:179.58px" width="6.30" height="16"><text x="0" y="12" textLength="5.30" lengthAdjust="spacingAndGlyphs" fill="#000">2</text></svg>
<svg class="t" style="left:532.80px;top:163.16px" width="6.30" height="16"><text x="0" y="12" textLength="5.30" lengthAdjust="spacingAndGlyphs" fill="#000">4</text></svg>
<svg class="t" style="left:532.80px;top:146.74px" width="6.30" height="16"><text x="0" y="12" textLength="5.30" lengthAdjust="spacingAndGlyphs" fill="#000">6</text></svg>
<svg class="t" style="left:532.80px;top:130.32px" width="6.30" height="16"><text x="0" y="12" textLength="5.30" lengthAdjust="spacingAndGlyphs" fill="#000">8</text></svg>
<svg class="t" style="left:532.80px;top:113.90px" width="12.30" height="16"><text x="0" y="12" textLength="11.30" lengthAdjust="spacingAndGlyphs" fill="#000">10</text></svg>
<svg class="t" style="left:532.80px;top:97.48px" width="12.30" height="16"><text x="0" y="12" textLength="11.30" lengthAdjust="spacingAndGlyphs" fill="#000">12</text></svg>
<svg class="t" style="left:532.80px;top:81.06px" width="12.30" height="16"><text x="0" y="12" textLength="11.30" lengthAdjust="spacingAndGlyphs" fill="#000">14</text></svg>
<svg class="t" style="left:532.80px;top:64.64px" width="12.30" height="16"><text x="0" y="12" textLength="11.30" lengthAdjust="spacingAndGlyphs" fill="#000">16</text></svg>
<svg class="t" style="left:532.80px;top:319.80px" width="6.30" height="16"><text x="0" y="12" textLength="5.30" lengthAdjust="spacingAndGlyphs" fill="#000">8</text></svg>
<svg class="t" style="left:532.80px;top:293.60px" width="12.30" height="16"><text x="0" y="12" textLength="11.30" lengthAdjust="spacingAndGlyphs" fill="#000">16</text></svg>
<svg class="t" style="left:532.80px;top:267.40px" width="12.30" height="16"><text x="0" y="12" textLength="11.30" lengthAdjust="spacingAndGlyphs" fill="#000">24</text></svg>
<svg class="t" style="left:532.80px;top:241.20px" width="12.30" height="16"><text x="0" y="12" textLength="11.30" lengthAdjust="spacingAndGlyphs" fill="#000">32</text></svg>
<svg class="t" style="left:532.80px;top:215.00px" width="12.30" height="16"><text x="0" y="12" textLength="11.30" lengthAdjust="spacingAndGlyphs" fill="#000">40</text></svg>
<svg class="t" style="left:252.50px;top:55.40px" width="278.50" height="16"><text x="0" y="12" textLength="277.50" lengthAdjust="spacingAndGlyphs" fill="#000">recorded with HL-DT-STDVDRAM GSA-4120B vA115</text></svg>
<div style="position:absolute;left:18px;top:374px;width:169px;height:61px;border:1px solid #868686"></div>
<div style="position:absolute;left:28px;top:374px;width:61px;height:1px;background:#fff"></div>
<div style="position:absolute;left:28px;top:371px;width:6px;height:6px;border:1px solid #000;background:#00ffff"></div>
<svg class="t" style="left:40.00px;top:365.60px" width="44.80" height="16"><text x="0" y="12" textLength="43.80" lengthAdjust="spacingAndGlyphs" fill="#000">PI Errors</text></svg>
<div style="position:absolute;left:198px;top:374px;width:168px;height:61px;border:1px solid #868686"></div>
<div style="position:absolute;left:208px;top:374px;width:71px;height:1px;background:#fff"></div>
<div style="position:absolute;left:208px;top:371px;width:6px;height:6px;border:1px solid #000;background:#ffff00"></div>
<svg class="t" style="left:220.50px;top:365.60px" width="54.00" height="16"><text x="0" y="12" textLength="53.00" lengthAdjust="spacingAndGlyphs" fill="#000">PI Failures</text></svg>
<div style="position:absolute;left:379px;top:374px;width:169px;height:45px;border:1px solid #868686"></div>
<div style="position:absolute;left:389px;top:374px;width:38px;height:1px;background:#fff"></div>
<div style="position:absolute;left:389px;top:371px;width:6px;height:6px;border:1px solid #000;background:#ff00ff"></div>
<svg class="t" style="left:402.00px;top:365.60px" width="26.00" height="16"><text x="0" y="12" textLength="25.00" lengthAdjust="spacingAndGlyphs" fill="#000">Jitter</text></svg>
<svg class="j" style="left:26.60px;top:382.20px" width="26.50" height="12.00"><text x="0.5" y="10.5" textLength="25.50" lengthAdjust="spacingAndGlyphs" fill="#000">平均:</text></svg>
<svg class="j" style="left:26.60px;top:400.20px" width="26.50" height="12.00"><text x="0.5" y="10.5" textLength="25.50" lengthAdjust="spacingAndGlyphs" fill="#000">最大:</text></svg>
<svg class="j" style="left:26.60px;top:418.20px" width="29.80" height="12.00"><text x="0.5" y="10.5" textLength="28.80" lengthAdjust="spacingAndGlyphs" fill="#000">合計 :</text></svg>
<svg class="t" style="left:143.00px;top:380.40px" width="33.00" height="16"><text x="0" y="12" textLength="32.00" lengthAdjust="spacingAndGlyphs" fill="#00007c">270.97</text></svg>
<svg class="t" style="left:151.90px;top:398.40px" width="24.10" height="16"><text x="0" y="12" textLength="23.10" lengthAdjust="spacingAndGlyphs" fill="#00007c">1274</text></svg>
<svg class="t" style="left:134.05px;top:416.40px" width="41.95" height="16"><text x="0" y="12" textLength="40.95" lengthAdjust="spacingAndGlyphs" fill="#00007c">4219792</text></svg>
<svg class="j" style="left:208.60px;top:382.20px" width="26.50" height="12.00"><text x="0.5" y="10.5" textLength="25.50" lengthAdjust="spacingAndGlyphs" fill="#000">平均:</text></svg>
<svg class="j" style="left:208.60px;top:400.20px" width="26.50" height="12.00"><text x="0.5" y="10.5" textLength="25.50" lengthAdjust="spacingAndGlyphs" fill="#000">最大:</text></svg>
<svg class="j" style="left:208.60px;top:418.20px" width="29.80" height="12.00"><text x="0.5" y="10.5" textLength="28.80" lengthAdjust="spacingAndGlyphs" fill="#000">合計 :</text></svg>
<svg class="t" style="left:331.25px;top:380.40px" width="27.05" height="16"><text x="0" y="12" textLength="26.05" lengthAdjust="spacingAndGlyphs" fill="#00007c">67.79</text></svg>
<svg class="t" style="left:340.15px;top:398.40px" width="18.15" height="16"><text x="0" y="12" textLength="17.15" lengthAdjust="spacingAndGlyphs" fill="#00007c">667</text></svg>
<svg class="t" style="left:322.30px;top:416.40px" width="36.00" height="16"><text x="0" y="12" textLength="35.00" lengthAdjust="spacingAndGlyphs" fill="#00007c">834327</text></svg>
<svg class="j" style="left:388.60px;top:382.20px" width="26.50" height="12.00"><text x="0.5" y="10.5" textLength="25.50" lengthAdjust="spacingAndGlyphs" fill="#000">平均:</text></svg>
<svg class="j" style="left:388.60px;top:400.20px" width="26.50" height="12.00"><text x="0.5" y="10.5" textLength="25.50" lengthAdjust="spacingAndGlyphs" fill="#000">最大:</text></svg>
<svg class="t" style="left:501.50px;top:380.80px" width="37.80" height="16"><text x="0" y="12" textLength="36.80" lengthAdjust="spacingAndGlyphs" fill="#00007c">13.17 %</text></svg>
<svg class="t" style="left:507.50px;top:398.80px" width="31.80" height="16"><text x="0" y="12" textLength="30.80" lengthAdjust="spacingAndGlyphs" fill="#00007c">31.4 %</text></svg>
<svg class="t" style="left:389.50px;top:421.80px" width="61.80" height="16"><text x="0" y="12" textLength="60.80" lengthAdjust="spacingAndGlyphs" fill="#000">PO Failures:</text></svg>
<svg class="t" style="left:501.50px;top:421.80px" width="36.50" height="16"><text x="0" y="12" textLength="35.50" lengthAdjust="spacingAndGlyphs" fill="#00007c">463865</text></svg>
<div style="position:absolute;left:562px;top:59px;width:66px;height:17px;border:1px solid #10188c;border-radius:3px;background:#fff;overflow:hidden"><div style="position:absolute;left:1px;right:1px;top:10px;bottom:1px;background:#c0c0c0"></div></div>
<div style="position:absolute;left:654px;top:59px;width:66px;height:17px;border:1px solid #10188c;border-radius:3px;background:#fff;overflow:hidden"><div style="position:absolute;left:1px;right:1px;top:10px;bottom:1px;background:#c0c0c0"></div><div style="position:absolute;left:1px;top:1px;right:1px;bottom:1px;border:1px dotted #222;border-top-color:#c00000;border-bottom-color:#9c9c00"></div></div>
<svg class="j" style="left:583.30px;top:61.10px" width="24.10" height="12.00"><text x="0.5" y="10.5" textLength="23.10" lengthAdjust="spacingAndGlyphs" fill="#000">開始</text></svg>
<svg class="j" style="left:667.10px;top:61.10px" width="24.60" height="12.00"><text x="0.5" y="10.5" textLength="23.60" lengthAdjust="spacingAndGlyphs" fill="#000">終了</text></svg>
<svg class="t" style="left:693.00px;top:59.20px" width="14.30" height="16"><text x="0" y="12" textLength="13.30" lengthAdjust="spacingAndGlyphs" fill="#000">(<tspan text-decoration="underline">X</tspan>)</text></svg>
<div style="position:absolute;left:561px;top:93px;width:161px;height:72px;border:1px solid #bdbdbd;border-radius:4px;clip-path:inset(0 1px 0 0)"></div>
<div style="position:absolute;left:567px;top:91px;width:63.5px;height:5px;background:#fff"></div>
<svg class="j" style="left:569.10px;top:85.80px" width="59.30" height="12.00"><text x="0.5" y="10.5" textLength="58.30" lengthAdjust="spacingAndGlyphs" fill="#0a14f5">ディスク情報</text></svg>
<svg class="j" style="left:568.60px;top:100.40px" width="31.80" height="12.00"><text x="0.5" y="10.5" textLength="30.80" lengthAdjust="spacingAndGlyphs" fill="#000">タイプ:</text></svg>
<svg class="t" style="left:617.30px;top:98.40px" width="39.00" height="16"><text x="0" y="12" textLength="38.00" lengthAdjust="spacingAndGlyphs" fill="#00007c">DVD-R</text></svg>
<svg class="t" style="left:568.50px;top:113.70px" width="13.70" height="16"><text x="0" y="12" textLength="12.70" lengthAdjust="spacingAndGlyphs" fill="#000">ID:</text></svg>
<svg class="t" style="left:617.30px;top:113.70px" width="69.00" height="16"><text x="0" y="12" textLength="68.00" lengthAdjust="spacingAndGlyphs" fill="#00007c">BeAll G40001</text></svg>
<svg class="j" style="left:568.60px;top:130.80px" width="26.30" height="12.00"><text x="0.5" y="10.5" textLength="25.30" lengthAdjust="spacingAndGlyphs" fill="#000">日付:</text></svg>
<svg class="t" style="left:617.30px;top:128.80px" width="86.00" height="16"><text x="0" y="12" textLength="85.00" lengthAdjust="spacingAndGlyphs" fill="#00007c">24 January 2005</text></svg>
<svg class="t" style="left:568.50px;top:144.20px" width="29.60" height="16"><text x="0" y="12" textLength="28.60" lengthAdjust="spacingAndGlyphs" fill="#000">Label:</text></svg>
<svg class="t" style="left:617.30px;top:144.20px" width="73.00" height="16"><text x="0" y="12" textLength="72.00" lengthAdjust="spacingAndGlyphs" fill="#00007c">CDS_TEST_B2</text></svg>
<div style="position:absolute;left:561px;top:173px;width:161px;height:165px;border:1px solid #bdbdbd;border-radius:4px;clip-path:inset(0 1px 0 0)"></div>
<div style="position:absolute;left:567px;top:171px;width:46.5px;height:5px;background:#fff"></div>
<svg class="t" style="left:569.50px;top:164.70px" width="42.50" height="16"><text x="0" y="12" textLength="41.50" lengthAdjust="spacingAndGlyphs" fill="#0a14f5">Settings</text></svg>
<svg class="j" style="left:568.60px;top:188.80px" width="47.80" height="12.00"><text x="0.5" y="10.5" textLength="46.80" lengthAdjust="spacingAndGlyphs" fill="#000">転送速度</text></svg>
<div style="position:absolute;left:631px;top:185px;width:79px;height:18px;border:1px solid #808080;border-right-width:2px;background:#fff"></div>
<div style="position:absolute;left:695px;top:203px;width:16px;height:1px;background:#808080"></div>
<div style="position:absolute;left:695px;top:186px;width:1px;height:17px;background:#808080"></div>
<div style="position:absolute;left:697px;top:194px;width:14px;height:9px;background:#c0c0c0"></div>
<svg style="position:absolute;left:698px;top:191px" width="11" height="8" viewBox="0 0 11 8"><path d="M1.4 1.4L5.4 5.8L9.4 1.4" fill="none" stroke="#6c6c6c" stroke-width="2"/></svg>
<svg class="j" style="left:634.10px;top:188.20px" width="24.30" height="12.00"><text x="0.5" y="10.5" textLength="23.30" lengthAdjust="spacingAndGlyphs" fill="#000">最大</text></svg>
<svg class="j" style="left:568.60px;top:213.80px" width="23.80" height="12.00"><text x="0.5" y="10.5" textLength="22.80" lengthAdjust="spacingAndGlyphs" fill="#000">開始</text></svg>
<div style="position:absolute;left:631px;top:209px;width:68px;height:16px;border:1px solid #bcbcbc;background:#fff"></div>
<svg class="t" style="left:633.30px;top:209.60px" width="45.90" height="16"><text x="0" y="12" textLength="44.90" lengthAdjust="spacingAndGlyphs" fill="#000">0000 MB</text></svg>
<svg class="j" style="left:568.60px;top:236.20px" width="47.80" height="12.00"><text x="0.5" y="10.5" textLength="46.80" lengthAdjust="spacingAndGlyphs" fill="#000">終了位置</text></svg>
<div style="position:absolute;left:631px;top:232px;width:68px;height:16px;border:1px solid #bcbcbc;background:#fff"></div>
<svg class="t" style="left:633.30px;top:232.60px" width="45.90" height="16"><text x="0" y="12" textLength="44.90" lengthAdjust="spacingAndGlyphs" fill="#000">4622 MB</text></svg>
<div style="position:absolute;left:569px;top:255px;width:11px;height:11px;border:1px solid #1f8888;background:#fff"></div>
<svg style="position:absolute;left:571px;top:257px" width="9" height="9" viewBox="0 0 9 9"><path d="M1.2 3.8L3.6 6.4L7.8 1.6" fill="none" stroke="#0b8a0b" stroke-width="2.1"/></svg>
<svg class="t" style="left:584.50px;top:253.70px" width="68.00" height="16"><text x="0" y="12" textLength="67.00" lengthAdjust="spacingAndGlyphs" fill="#000">Show C1/PIE</text></svg>
<div style="position:absolute;left:569px;top:272px;width:11px;height:11px;border:1px solid #1f8888;background:#fff"></div>
<svg style="position:absolute;left:571px;top:274px" width="9" height="9" viewBox="0 0 9 9"><path d="M1.2 3.8L3.6 6.4L7.8 1.6" fill="none" stroke="#0b8a0b" stroke-width="2.1"/></svg>
<svg class="t" style="left:584.50px;top:270.30px" width="68.00" height="16"><text x="0" y="12" textLength="67.00" lengthAdjust="spacingAndGlyphs" fill="#000">Show C2/PIF</text></svg>
<div style="position:absolute;left:569px;top:288px;width:11px;height:11px;border:1px solid #1f8888;background:#fff"></div>
<svg style="position:absolute;left:571px;top:290px" width="9" height="9" viewBox="0 0 9 9"><path d="M1.2 3.8L3.6 6.4L7.8 1.6" fill="none" stroke="#0b8a0b" stroke-width="2.1"/></svg>
<svg class="t" style="left:584.50px;top:286.70px" width="59.50" height="16"><text x="0" y="12" textLength="58.50" lengthAdjust="spacingAndGlyphs" fill="#000">Show Jitter</text></svg>
<div style="position:absolute;left:569px;top:305px;width:11px;height:11px;border:1px solid #1f8888;background:#fff"></div>
<svg style="position:absolute;left:571px;top:307px" width="9" height="9" viewBox="0 0 9 9"><path d="M1.2 3.8L3.6 6.4L7.8 1.6" fill="none" stroke="#0b8a0b" stroke-width="2.1"/></svg>
<svg class="t" style="left:584.50px;top:303.00px" width="92.00" height="16"><text x="0" y="12" textLength="91.00" lengthAdjust="spacingAndGlyphs" fill="#000">Show Read Speed</text></svg>
<div style="position:absolute;left:569px;top:321px;width:11px;height:11px;border:1px solid #1f8888;background:#fff"></div>
<svg style="position:absolute;left:571px;top:323px" width="9" height="9" viewBox="0 0 9 9"><path d="M1.2 3.8L3.6 6.4L7.8 1.6" fill="none" stroke="#0b8a0b" stroke-width="2.1"/></svg>
<svg class="t" style="left:584.50px;top:319.30px" width="92.00" height="16"><text x="0" y="12" textLength="91.00" lengthAdjust="spacingAndGlyphs" fill="#000">Show Write Speed</text></svg>
<div style="position:absolute;left:561px;top:344px;width:161px;height:22px;border:1px solid #bdbdbd;border-radius:4px;clip-path:inset(0 1px 0 0)"></div>
<svg class="j" style="left:568.60px;top:350.20px" width="52.80" height="12.00"><text x="0.5" y="10.5" textLength="51.80" lengthAdjust="spacingAndGlyphs" fill="#000">品質スコア:</text></svg>
<svg class="t" style="left:700.80px;top:348.20px" width="6.40" height="16"><text x="0" y="12" textLength="5.40" lengthAdjust="spacingAndGlyphs" fill="#00007c">0</text></svg>
<div style="position:absolute;left:561px;top:374px;width:161px;height:61px;border:1px solid #bdbdbd;border-radius:4px;clip-path:inset(0 1px 0 0)"></div>
<svg class="j" style="left:568.60px;top:381.60px" width="50.30" height="12.00"><text x="0.5" y="10.5" textLength="49.30" lengthAdjust="spacingAndGlyphs" fill="#000">進行状況:</text></svg>
<svg class="t" style="left:678.70px;top:380.00px" width="30.60" height="16"><text x="0" y="12" textLength="29.60" lengthAdjust="spacingAndGlyphs" fill="#00007c">100 %</text></svg>
<svg class="j" style="left:568.60px;top:400.20px" width="47.30" height="12.00"><text x="0.5" y="10.5" textLength="46.30" lengthAdjust="spacingAndGlyphs" fill="#000">ポジション:</text></svg>
<svg class="t" style="left:661.50px;top:398.70px" width="46.00" height="16"><text x="0" y="12" textLength="45.00" lengthAdjust="spacingAndGlyphs" fill="#00007c">4621 MB</text></svg>
<svg class="j" style="left:568.60px;top:418.30px" width="26.30" height="12.00"><text x="0.5" y="10.5" textLength="25.30" lengthAdjust="spacingAndGlyphs" fill="#000">速度:</text></svg>
<svg class="t" style="left:670.70px;top:417.00px" width="38.60" height="16"><text x="0" y="12" textLength="37.60" lengthAdjust="spacingAndGlyphs" fill="#00007c">49.66 X</text></svg>
</div>
</body></html>
